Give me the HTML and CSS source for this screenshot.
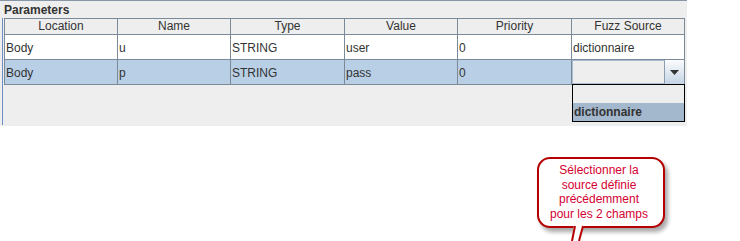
FILE: index.html
```html
<!DOCTYPE html>
<html>
<head>
    <title>Parameters</title>
    <meta name="viewport" content="width=device-width, initial-scale=1">
    <link rel="stylesheet" href="styles.css">
</head>
<body>
    <div class="panel">
        <div class="legend">Parameters</div>
        <div class="scroll">
            <div class="grid">
                <div class="head">Location</div>
                <div class="head">Name</div>
                <div class="head">Type</div>
                <div class="head">Value</div>
                <div class="head">Priority</div>
                <div class="head">Fuzz Source</div>

                <div class="cell">Body</div>
                <div class="cell">u</div>
                <div class="cell">STRING</div>
                <div class="cell">user</div>
                <div class="cell">0</div>
                <div class="cell">dictionnaire</div>

                <div class="cell selected">Body</div>
                <div class="cell selected">p</div>
                <div class="cell selected">STRING</div>
                <div class="cell selected">pass</div>
                <div class="cell selected">0</div>
                <div class="cell selected combo-cell">
                    <div class="combo">
                        <div class="combo-field"></div>
                        <div class="combo-button">
                            <svg width="9" height="5" viewBox="0 0 9 5"><polygon points="0,0 9,0 4.5,5" fill="#333"/></svg>
                        </div>
                    </div>
                </div>
            </div>
        </div>

        <div class="popup">
            <div class="item"></div>
            <div class="item active">dictionnaire</div>
        </div>
    </div>

    <div class="callout">Sélectionner la<br>source définie<br>précédemment<br>pour les 2 champs</div>
    <svg class="tail" width="20" height="17" viewBox="0 0 20 17">
        <polygon points="6,0 16,0 11,17 4,17" fill="#fff"/>
        <line x1="7" y1="2" x2="4" y2="17" stroke="#b40000" stroke-width="2"/>
        <line x1="15" y1="2" x2="11" y2="17" stroke="#b40000" stroke-width="2"/>
    </svg>
</body>
</html>
```

FILE: styles.css
```css
body {
    margin: 0;
    background: #fff;
    font-family: "Liberation Sans", Arial, sans-serif;
    font-size: 12px;
    color: #333;
}
.panel {
    position: relative;
    width: 687px;
    height: 125px;
    background: #eee;
    border-top: 1px solid #8797a6;
}
.legend {
    height: 15px;
    padding: 2px 0 0 4px;
    line-height: 15px;
    font-weight: bold;
}
.scroll {
    height: 107px;
    margin-left: 2px;
    padding-left: 1px;
    border-left: 1px solid #6f8fc4;
}
.grid {
    display: grid;
    grid-template-columns: 113px 113px 114px 113px 114px 113px;
    width: 681px;
    border-top: 1px solid #7a8a99;
    border-left: 1px solid #7a8a99;
    box-sizing: border-box;
}
.head {
    height: 15px;
    line-height: 15px;
    text-align: center;
    background: #eee;
    border-right: 1px solid #7a8a99;
    border-bottom: 1px solid #7a8a99;
}
.cell {
    height: 23px;
    padding: 1px 0 0 1px;
    line-height: 24px;
    background: #fff;
    border-right: 1px solid #7a8a99;
    border-bottom: 1px solid #7a8a99;
    white-space: nowrap;
}
.cell.selected {
    background: #b8cfe5;
}
.cell.combo-cell {
    padding: 0;
    height: 24px;
}
.combo {
    display: flex;
    height: 24px;
}
.combo-field {
    flex: 1;
    background: #eee;
    border: 1px solid #a9bdd2;
    border-right: 1px solid #8a9cae;
}
.combo-button {
    width: 19px;
    display: flex;
    align-items: center;
    justify-content: center;
    background: linear-gradient(#fbfcfd, #c4d4e5);
}
.popup {
    position: absolute;
    left: 572px;
    top: 83px;
    width: 111px;
    border: 1px solid #000;
    background: #eee;
}
.item {
    height: 18px;
    padding-left: 1px;
    line-height: 18px;
    font-weight: bold;
}
.item.active {
    background: #a3b8cc;
}
.callout {
    position: absolute;
    left: 537px;
    top: 157px;
    width: 128px;
    height: 71px;
    box-sizing: border-box;
    padding: 4px 6px 0 2px;
    border: 2px solid #b40000;
    border-radius: 13px;
    background: #fff;
    box-shadow: 3px 4px 4px rgba(0, 0, 0, 0.35);
    color: #d40032;
    text-align: center;
    line-height: 14.5px;
}
.tail {
    position: absolute;
    left: 568px;
    top: 224px;
}
```
